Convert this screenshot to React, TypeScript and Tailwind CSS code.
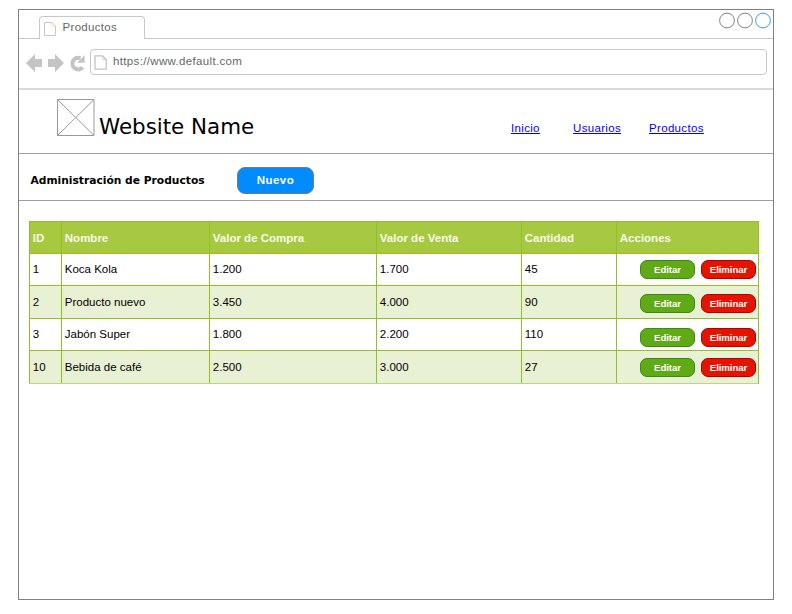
const arial = "font-['Liberation_Sans',Arial,sans-serif]";

function PageIcon({ className }: { className: string }) {
  return (
    <svg className={className} viewBox="0 0 12 14" fill="none" stroke="#c8c8c8">
      <path d="M.5.5H8L11.5 4V13.5H.5Z" />
      <path d="M8 .5V4H11.5" strokeOpacity=".45" />
    </svg>
  );
}

function Tabs() {
  return (
    <div className="relative flex h-[29px] shrink-0 justify-between border-b border-[#c8c8c8]">
      <div className="mt-[6px] ml-[20px] flex h-[23px] w-[106px] rounded-t-[4px] border border-b-0 border-[#c8c8c8] bg-white pl-[4px]">
        <PageIcon className="mt-[5px] h-[14px] w-[12px]" />
        <span className="ml-[6.5px] pt-[3px] text-[11.5px] leading-[14px] tracking-[0.32px] text-[#666]">Productos</span>
      </div>
      <svg className="mt-[2px] mr-[1px] h-[17px] w-[53px]" viewBox="0 0 53 17" fill="none" stroke="#808080">
        <circle cx="8" cy="8.5" r="7.4" />
        <circle cx="26" cy="8.5" r="7.4" />
        <circle cx="44" cy="8.5" r="7.4" stroke="#3399ff" />
      </svg>
    </div>
  );
}

function Toolbar() {
  return (
    <div className="flex h-[51px] shrink-0 items-start border-b-2 border-[#dadada] pt-[10px] pl-[7px]">
      <svg className="mt-[4px] h-[20px] w-[60px]" viewBox="26 53 60 20" fill="#c4c4c4">
        <path d="M26 63 35 54V59H42V67H35V72Z" />
        <path d="M64 63 55 54V59H48V67H55V72Z" />
        <path d="M82.6 67.4A5.8 5.8 0 1 1 80.5 58.2" fill="none" stroke="#c4c4c4" strokeWidth="4.2" />
        <path d="M84.7 55V62.8H77.2Z" />
      </svg>
      <div className="ml-[4px] flex h-[26px] w-[677px] rounded-[4px] border border-[#c8c8c8] pl-[3px]">
        <svg className="mt-[5px] h-[15px] w-[13px]" viewBox="0 0 13 15" fill="none" stroke="#c4c4c4" strokeWidth="1.3">
          <path d="M1 .8H8.5L12.2 4.5V14.2H1Z" />
          <path d="M8.5 .8V4.5H12.2" strokeOpacity=".5" />
        </svg>
        <span className="ml-[6px] pt-[4px] text-[11.5px] leading-[15px] tracking-[0.34px] text-[#666]">https://www.default.com</span>
      </div>
    </div>
  );
}

function Header() {
  return (
    <header className="flex h-[64px] shrink-0 border-b border-[#a0a0a0] pl-[38px]">
      <svg className="mt-[9px] h-[37px] w-[38px]" viewBox="0 0 38 37" fill="none" stroke="#999">
        <path d="M.5.5H37V36.5H.5ZM.5.5 37 36.5M37 .5.5 36.5" />
      </svg>
      <h1 className="mt-[23px] ml-[4px] w-[412px] font-['DejaVu_Sans',Verdana,sans-serif] text-[21.4px] leading-[28px] text-black">
        Website Name
      </h1>
      <nav className="flex pt-[31px] text-[11.5px] leading-[14px] tracking-[0.33px] text-[#0000ff] underline">
        <a className="w-[62px]">Inicio</a>
        <a className="w-[76px]">Usuarios</a>
        <a>Productos</a>
      </nav>
    </header>
  );
}

function TitleBar() {
  return (
    <div className="flex h-[47px] shrink-0 border-b border-[#a0a0a0] pl-[11px]">
      <h2 className="w-[207px] pt-[20px] pl-[0.5px] font-['DejaVu_Sans',Verdana,sans-serif] text-[10.7px] leading-[14px] font-bold text-black">
        Administración de Productos
      </h2>
      <button className="mt-[13px] flex h-[27px] w-[77px] items-center justify-center rounded-[8px] border border-[#707c88] bg-[#008cff] text-[11.5px] font-bold tracking-[0.45px] text-white">
        Nuevo
      </button>
    </div>
  );
}

const columns = ["ID", "Nombre", "Valor de Compra", "Valor de Venta", "Cantidad", "Acciones"];

const rows = [
  { cells: ["1", "Koca Kola", "1.200", "1.700", "45"], style: "bg-white", text: "pt-[8px]", actions: "pt-[6px]" },
  { cells: ["2", "Producto nuevo", "3.450", "4.000", "90"], style: "bg-[#e9f1d4]", text: "pt-[9px]", actions: "pt-[8px]" },
  { cells: ["3", "Jabón Super", "1.800", "2.200", "110"], style: "bg-white", text: "pt-[8px]", actions: "pt-[9px]" },
  { cells: ["10", "Bebida de café", "2.500", "3.000", "27"], style: "bg-[#e9f1d4]", text: "pt-[9px]", actions: "pt-[7px]" },
];

const cols = "grid grid-cols-[32px_148px_167px_145px_95px_142px]";
const cell = "border-t border-l border-[#97bf22] pl-[2.8px]";
const action = "flex h-[19px] w-[55px] items-center justify-center rounded-[7px] border text-[9.7px] tracking-[-0.1px] font-bold text-white";

function ProductTable() {
  return (
    <div className="mt-[20px] ml-[10px] grid w-[730px] grid-rows-[32px_32px_33px_32px_33px] border-r border-b border-r-[#97bf22] border-b-[#bfd77c] text-[11.5px] leading-[15px]">
      <div className={`${cols} bg-[#a7c942] font-bold text-[#f7fbe9]`}>
        {columns.map((c) => (
          <div key={c} className={`${cell} pt-[9px]`}>{c}</div>
        ))}
      </div>
      {rows.map((r) => (
        <div key={r.cells[0]} className={`${cols} ${r.style} text-black`}>
          {r.cells.map((c, i) => (
            <div key={i} className={`${cell} ${r.text}`}>{c}</div>
          ))}
          <div className={`flex items-start gap-[6px] border-t border-l border-[#97bf22] pl-[23px] ${r.actions}`}>
            <button className={`${action} border-[#3d8a10] bg-[#60a917]`}>Editar</button>
            <button className={`${action} border-[#b20000] bg-[#e51400]`}>Eliminar</button>
          </div>
        </div>
      ))}
    </div>
  );
}

export default function App() {
  return (
    <div className={`h-[614px] w-[792px] overflow-hidden bg-white pt-[9px] pl-[18px] ${arial}`}>
      <div className="flex h-[591px] w-[756px] flex-col border border-[#808080]">
        <Tabs />
        <Toolbar />
        <Header />
        <TitleBar />
        <ProductTable />
      </div>
    </div>
  );
}
